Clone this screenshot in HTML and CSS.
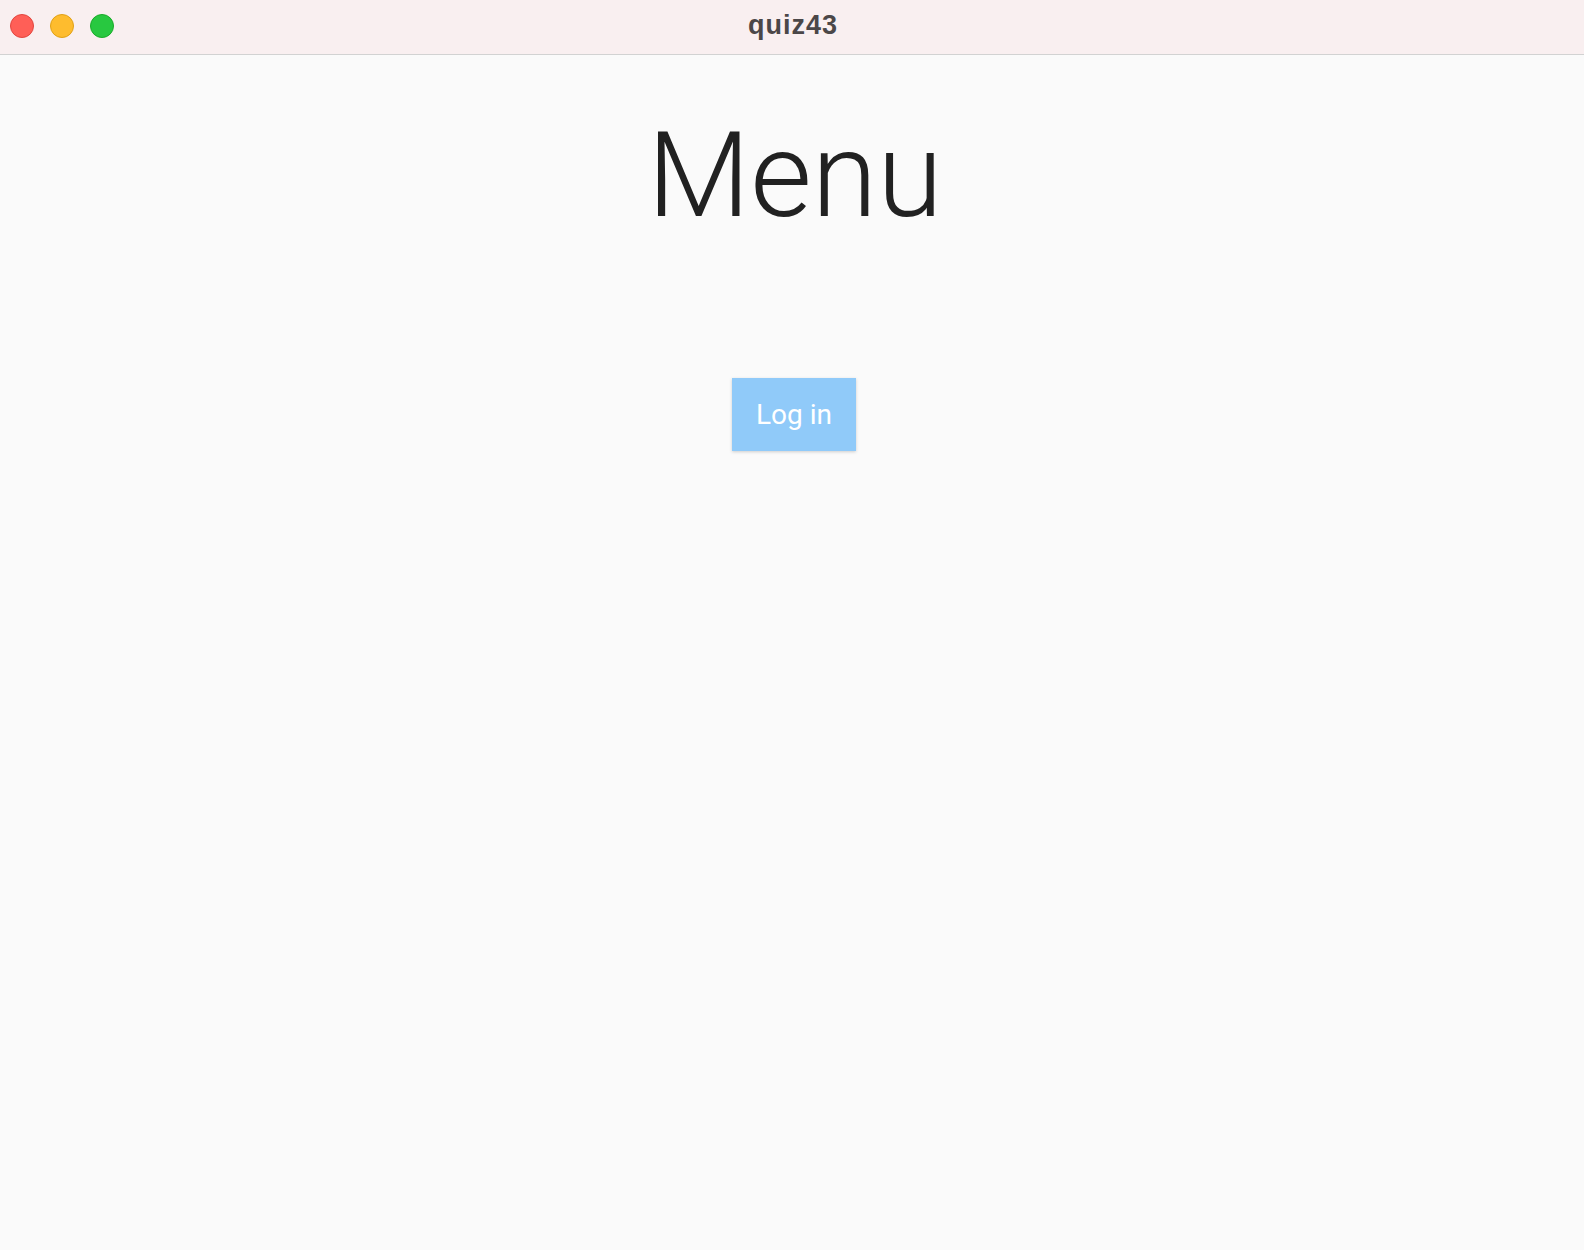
FILE: index.html
```html
<!DOCTYPE html>
<html>
<head>
<meta charset="utf-8">
<link rel="stylesheet" href="styles.css">
</head>
<body>
<div class="window">
  <header class="titlebar">
    <div class="lights">
      <span class="light red"></span>
      <span class="light yellow"></span>
      <span class="light green"></span>
    </div>
    <div class="title">quiz43</div>
  </header>
  <main class="content">
    <h1 class="heading">Menu</h1>
    <button class="login">Log in</button>
  </main>
</div>
</body>
</html>
```
FILE: styles.css
```css
* { box-sizing: border-box; }
html, body { margin: 0; padding: 0; }
body {
  width: 1584px;
  height: 1250px;
  background: #fafafa;
  overflow: hidden;
}
.window {
  display: flex;
  flex-direction: column;
  height: 100%;
}
.titlebar {
  position: relative;
  height: 55px;
  background: #f9eff0;
  border-bottom: 1px solid #d2d2d2;
  display: flex;
  align-items: center;
  justify-content: center;
}
.lights {
  position: absolute;
  left: 10px;
  top: 14px;
  display: flex;
  gap: 16px;
}
.light {
  width: 24px;
  height: 24px;
  border-radius: 50%;
  display: block;
}
.red { background: #ff5f57; border: 1px solid #e2463f; }
.yellow { background: #febc2e; border: 1px solid #e1a116; }
.green { background: #28c840; border: 1px solid #1aab29; }
.title {
  font-family: "Liberation Sans", Arial, sans-serif;
  font-weight: bold;
  font-size: 27px;
  letter-spacing: 1px;
  color: #4b4748;
  margin-top: -4px;
  margin-left: 2px;
}
.content {
  flex: 1;
  display: flex;
  flex-direction: column;
  align-items: center;
}
.heading {
  margin: 50px 0 0 6px;
  font-family: Roboto, sans-serif;
  font-weight: 300;
  font-size: 119px;
  line-height: 142px;
  color: #212121;
}
.login {
  margin-top: 131px;
  margin-left: 4px;
  width: 124px;
  height: 73px;
  border: none;
  background: #90caf9;
  color: #ffffff;
  font-family: Roboto, sans-serif;
  font-size: 28px;
  font-weight: 400;
  box-shadow: 0 1px 3px rgba(0,0,0,0.18);
  padding: 0;
}
```
